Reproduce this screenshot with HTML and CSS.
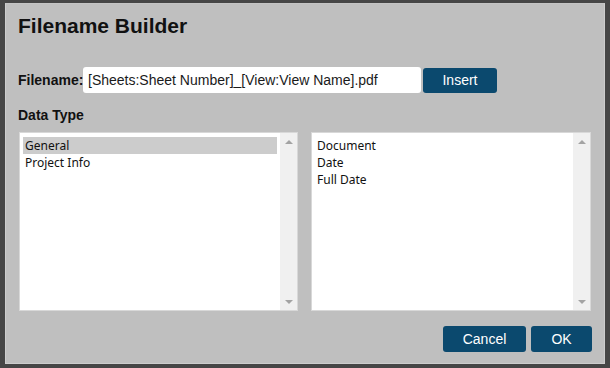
FILE: index.html
```html
<!DOCTYPE html>
<html lang="en">

<head>
    <meta charset="UTF-8">
    <title>Filename Builder</title>
    <link rel="stylesheet" href="styles.css">
</head>

<body>
    <div class="dialog">
        <h2 class="title">Filename Builder</h2>

        <div class="filename-row">
            <label for="filenameInput">Filename:</label>
            <input type="text" id="filenameInput" value="[Sheets:Sheet Number]_[View:View Name].pdf">
            <button class="btn insert-btn">Insert</button>
        </div>

        <div class="section-label">Data Type</div>

        <div class="lists">
            <div class="listbox left">
                <div class="items">
                    <div class="item selected">General</div>
                    <div class="item">Project Info</div>
                </div>
                <div class="scrollbar">
                    <span class="arrow up"></span>
                    <span class="arrow down"></span>
                </div>
            </div>
            <div class="listbox">
                <div class="items">
                    <div class="item">Document</div>
                    <div class="item">Date</div>
                    <div class="item">Full Date</div>
                </div>
                <div class="scrollbar">
                    <span class="arrow up"></span>
                    <span class="arrow down"></span>
                </div>
            </div>
        </div>

        <div class="actions">
            <button class="btn cancel-btn">Cancel</button>
            <button class="btn ok-btn">OK</button>
        </div>
    </div>
</body>

</html>
```

FILE: styles.css
```css
body {
    margin: 0;
    background: #464646;
    font-family: "Liberation Sans", Arial, sans-serif;
    height: 368px;
    overflow: hidden;
}

.dialog {
    box-sizing: border-box;
    width: 600px;
    height: 361px;
    margin: 3px 0 0 5px;
    padding: 0 11px 0 12px;
    background: #bfbfbf;
    border: 1px solid #cdcdcd;
    border-top-color: #c4c4c4;
}

.title {
    margin: 10px 0 0;
    font-size: 21px;
    line-height: 24px;
    font-weight: bold;
    color: #111;
}

.filename-row {
    display: flex;
    align-items: center;
    margin-top: 29px;
}

.filename-row label {
    font-size: 14px;
    font-weight: bold;
    color: #111;
    width: 65px;
}

#filenameInput {
    box-sizing: border-box;
    width: 338px;
    height: 26px;
    border: none;
    border-radius: 3px;
    padding: 0 5px;
    font-family: "Liberation Sans", Arial, sans-serif;
    font-size: 14px;
    color: #1a1a1a;
    background: #fff;
    margin-right: 2px;
}

.btn {
    height: 26px;
    padding: 0;
    border: none;
    border-radius: 3px;
    background: #0b496e;
    color: #fff;
    font-family: "Liberation Sans", Arial, sans-serif;
    font-size: 14px;
}

.insert-btn {
    width: 74px;
    height: 25px;
}

.cancel-btn {
    width: 83px;
}

.ok-btn {
    width: 61px;
}

.section-label {
    margin-top: 14px;
    font-size: 14px;
    line-height: 16px;
    font-weight: bold;
    color: #111;
}

.lists {
    display: flex;
    gap: 13px;
    margin: 9px 0 0 1px;
}

.listbox {
    box-sizing: border-box;
    display: flex;
    width: 280px;
    height: 179px;
    background: #fff;
    border: 1px solid #d8d8d8;
}

.listbox.left {
    width: 279px;
}

.items {
    flex: 1;
    padding: 4px 3px;
    font-family: "Noto Sans", sans-serif;
    font-size: 12px;
    color: #111;
}

.item {
    height: 17px;
    line-height: 17px;
    padding-left: 2px;
}

.item.selected {
    background: #cccccc;
}

.scrollbar {
    width: 17px;
    background: #f0f0f0;
    display: flex;
    flex-direction: column;
    justify-content: space-between;
    align-items: center;
    padding: 7px 0 6px;
}

.arrow {
    width: 0;
    height: 0;
    border-left: 4px solid transparent;
    border-right: 4px solid transparent;
}

.arrow.up {
    border-bottom: 4px solid #a3a3a3;
}

.arrow.down {
    border-top: 4px solid #a3a3a3;
}

.actions {
    display: flex;
    justify-content: flex-end;
    gap: 5px;
    margin: 15px 1px 0 0;
}
```
